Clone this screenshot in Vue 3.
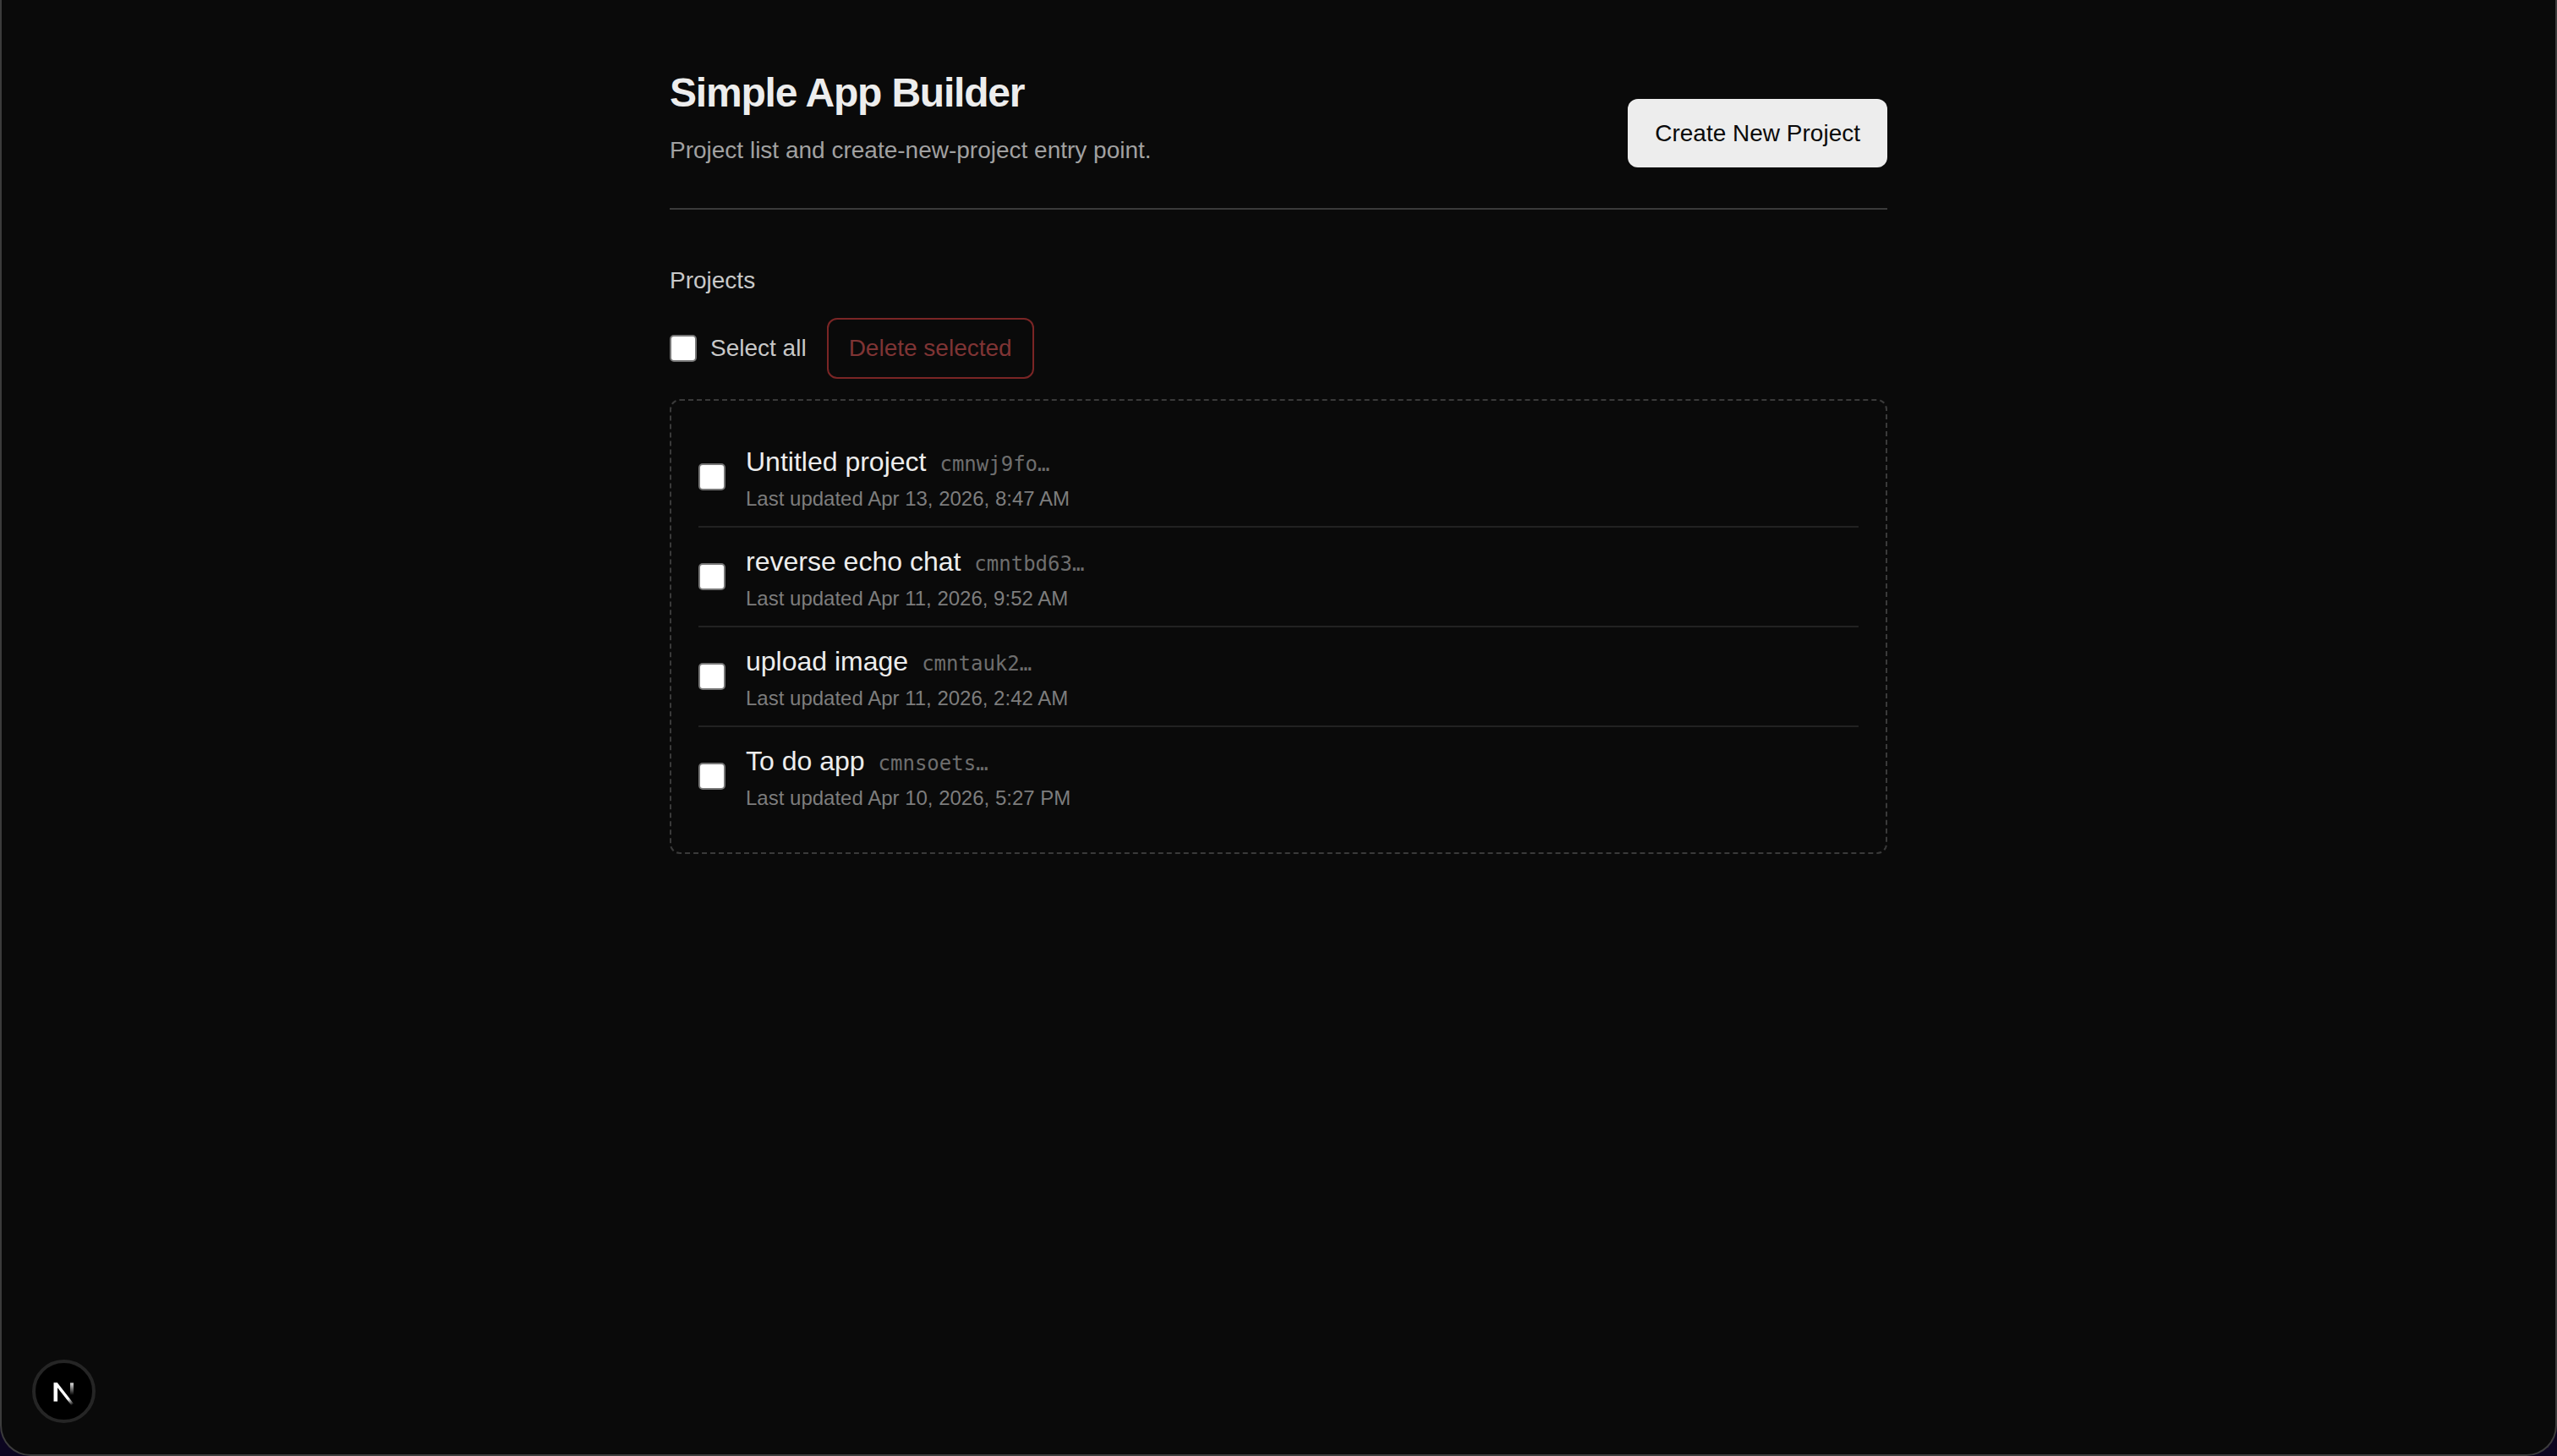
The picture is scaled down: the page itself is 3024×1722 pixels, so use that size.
<script setup>
import { ref } from 'vue'

const projects = ref([
  { id: 'cmnwj9fo…', name: 'Untitled project', updated: 'Apr 13, 2026, 8:47 AM' },
  { id: 'cmntbd63…', name: 'reverse echo chat', updated: 'Apr 11, 2026, 9:52 AM' },
  { id: 'cmntauk2…', name: 'upload image', updated: 'Apr 11, 2026, 2:42 AM' },
  { id: 'cmnsoets…', name: 'To do app', updated: 'Apr 10, 2026, 5:27 PM' },
])
</script>

<template>
  <div class="window">
    <main class="content">
      <header class="top">
        <div>
          <h1>Simple App Builder</h1>
          <p class="subtitle">Project list and create-new-project entry point.</p>
        </div>
        <button class="create-btn">Create New Project</button>
      </header>

      <section class="projects">
        <h2>Projects</h2>
        <div class="toolbar">
          <label class="select-all">
            <input type="checkbox" class="check" />
            <span>Select all</span>
          </label>
          <button class="delete-btn">Delete selected</button>
        </div>

        <ul class="list">
          <li v-for="project in projects" :key="project.id" class="row">
            <input type="checkbox" class="check row-check" />
            <div class="info">
              <div class="name-line">
                <span class="name">{{ project.name }}</span>
                <code class="id">{{ project.id }}</code>
              </div>
              <div class="updated">Last updated {{ project.updated }}</div>
            </div>
          </li>
        </ul>
      </section>
    </main>

    <div class="dev-badge">
      <svg width="32" height="32" viewBox="0 0 32 32" fill="none">
        <defs>
          <linearGradient id="nFade" x1="16" y1="16" x2="27" y2="31" gradientUnits="userSpaceOnUse">
            <stop offset="0" stop-color="#fff" />
            <stop offset="0.5" stop-color="#fff" />
            <stop offset="1" stop-color="#fff" stop-opacity="0" />
          </linearGradient>
          <linearGradient id="nBar" x1="25" y1="5" x2="25" y2="20" gradientUnits="userSpaceOnUse">
            <stop offset="0" stop-color="#fff" stop-opacity="0.9" />
            <stop offset="1" stop-color="#fff" stop-opacity="0" />
          </linearGradient>
        </defs>
        <path d="M3.5 5.5h4.5v22H3.5z" fill="#fff" />
        <path d="M3.5 5.5H8L27 30l-2.6 2z" fill="url(#nFade)" />
        <path d="M23 5.5h4v16h-4z" fill="url(#nBar)" />
      </svg>
    </div>
  </div>
</template>

<style>
html,
body {
  margin: 0;
  background: #0c0520;
}
</style>

<style scoped>
.window {
  position: relative;
  box-sizing: border-box;
  width: 3024px;
  height: 1722px;
  background: #0a0a0a;
  border: 2px solid #3c3c3c;
  border-top: none;
  border-radius: 0 0 36px 36px;
  font-family: "Liberation Sans", Arial, sans-serif;
  color: #ededed;
}

.content {
  width: 1440px;
  margin: 0 auto;
  padding-top: 80px;
}

.top {
  display: flex;
  justify-content: space-between;
  align-items: flex-end;
  padding-bottom: 48px;
  border-bottom: 2px solid #3a3a3a;
}

h1 {
  margin: 0;
  font-size: 48px;
  line-height: 60px;
  font-weight: 700;
  letter-spacing: -1.2px;
  color: #ededed;
}

.subtitle {
  margin: 18px 0 0;
  font-size: 28px;
  line-height: 40px;
  color: #a1a1a1;
}

.create-btn {
  box-sizing: border-box;
  height: 81px;
  padding: 0 32px;
  border: none;
  border-radius: 12px;
  background: #ededed;
  color: #0a0a0a;
  font: 400 28px "Liberation Sans", Arial, sans-serif;
}

.projects {
  margin-top: 64px;
}

h2 {
  margin: 0;
  font-size: 28px;
  line-height: 40px;
  font-weight: 400;
  color: #c8c8c8;
}

.toolbar {
  display: flex;
  align-items: center;
  gap: 24px;
  margin-top: 24px;
}

.select-all {
  display: flex;
  align-items: center;
  gap: 16px;
  font-size: 28px;
  color: #c8c8c8;
}

.check {
  appearance: none;
  box-sizing: border-box;
  flex: none;
  width: 32px;
  height: 32px;
  margin: 0;
  background: #fff;
  border: 2px solid #767676;
  border-radius: 5px;
}

.row-check {
  margin-bottom: 2px;
}

.delete-btn {
  box-sizing: border-box;
  height: 72px;
  padding: 0 24px;
  background: transparent;
  border: 2px solid #7a2525;
  border-radius: 12px;
  color: #7f3434;
  font: 400 28px "Liberation Sans", Arial, sans-serif;
}

.list {
  list-style: none;
  margin: 24px 0 0;
  padding: 32px;
  border: 2px dashed #3a3a3a;
  border-radius: 12px;
}

.row {
  display: flex;
  align-items: center;
  gap: 24px;
  padding: 18px 0 16px;
  border-bottom: 2px solid #222;
}

.row:last-child {
  border-bottom: none;
}

.name-line {
  display: flex;
  align-items: baseline;
  gap: 16px;
}

.name {
  font-size: 32px;
  line-height: 44px;
  color: #ededed;
}

.id {
  font-family: "DejaVu Sans Mono", monospace;
  font-size: 24px;
  color: #6e6e6e;
}

.updated {
  margin-top: 6px;
  font-size: 24px;
  line-height: 32px;
  color: #7d7d7d;
}

.dev-badge {
  position: absolute;
  left: 36px;
  bottom: 37px;
  box-sizing: border-box;
  display: flex;
  align-items: center;
  justify-content: center;
  width: 75px;
  height: 75px;
  background: #000;
  border: 4px solid #252525;
  border-radius: 50%;
}
</style>
